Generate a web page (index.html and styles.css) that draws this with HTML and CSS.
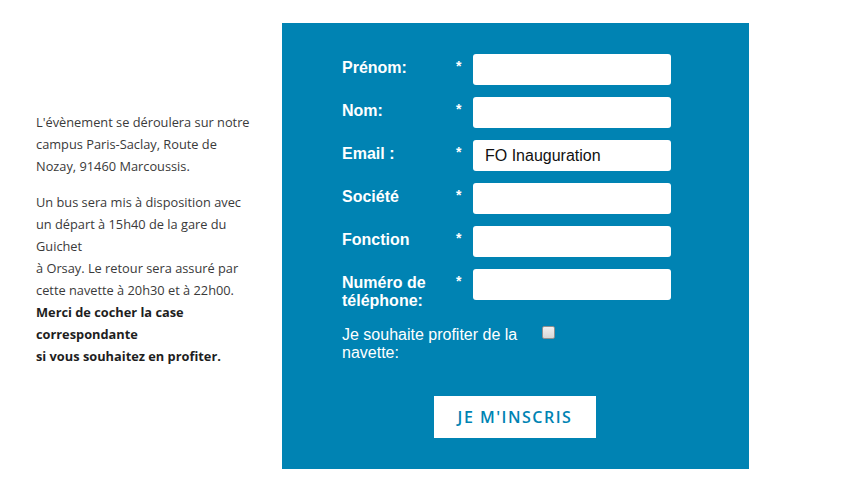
FILE: index.html
```html
<!DOCTYPE html>
<html lang="fr">
<head>
<meta charset="utf-8">
<title>Inscription</title>
<link rel="stylesheet" href="styles.css">
</head>
<body>
<div class="page">
  <div class="info">
    <p>L'évènement se déroulera sur notre campus Paris-Saclay, Route de Nozay, 91460 Marcoussis.</p>
    <p>Un bus sera mis à disposition avec un départ à 15h40 de la gare du Guichet<br>à Orsay. Le retour sera assuré par cette navette à 20h30 et à 22h00.<br><strong>Merci de cocher la case correspondante<br>si vous souhaitez en profiter.</strong></p>
  </div>
  <div class="panel">
    <form class="form">
      <div class="row"><label class="lbl">Prénom:</label><span class="req">*</span><input class="field" type="text"></div>
      <div class="row"><label class="lbl">Nom:</label><span class="req">*</span><input class="field" type="text"></div>
      <div class="row"><label class="lbl">Email :</label><span class="req">*</span><input class="field" type="text" value="FO Inauguration"></div>
      <div class="row"><label class="lbl">Société</label><span class="req">*</span><input class="field" type="text"></div>
      <div class="row"><label class="lbl">Fonction</label><span class="req">*</span><input class="field" type="text"></div>
      <div class="row"><label class="lbl lbl-wrap">Numéro de téléphone:</label><span class="req">*</span><input class="field" type="text"></div>
      <div class="check-row"><label class="check-lbl">Je souhaite profiter de la navette:</label><input class="check" type="checkbox"></div>
      <div class="actions"><button class="btn" type="button">JE M'INSCRIS</button></div>
    </form>
  </div>
</div>
</body>
</html>
```
FILE: styles.css
```css
html, body {
  margin: 0;
  padding: 0;
  background: #ffffff;
}
.page {
  display: flex;
  align-items: flex-start;
  padding-top: 23px;
}
.info {
  width: 222px;
  margin-left: 36px;
  padding-top: 88px;
  font-family: "Open Sans", "Liberation Sans", sans-serif;
  font-size: 12.8px;
  line-height: 22px;
  color: #3a3a3a;
}
.info p {
  margin: 0 0 14px 0;
}
.info strong {
  color: #1e1e1e;
  font-weight: 700;
}
.panel {
  margin-left: 24px;
  width: 467px;
  height: 446px;
  background: #0083b3;
  box-sizing: border-box;
  padding: 31px 0 0 60px;
}
.form {
  display: flex;
  flex-direction: column;
  gap: 12px;
  margin: 0;
}
.row {
  display: flex;
  align-items: flex-start;
}
.lbl {
  width: 114px;
  padding-top: 5px;
  font-family: "Liberation Sans", Arial, sans-serif;
  font-weight: 700;
  font-size: 16px;
  line-height: 18px;
  color: #ffffff;
}
.lbl-wrap {
  padding-right: 20px;
  box-sizing: border-box;
}
.req {
  width: 17px;
  padding-top: 4px;
  font-family: "Liberation Sans", Arial, sans-serif;
  font-weight: 700;
  font-size: 14px;
  line-height: 16px;
  color: #ffffff;
}
.field {
  width: 198px;
  height: 31px;
  box-sizing: border-box;
  border: none;
  border-radius: 3px;
  background: #ffffff;
  padding: 0 12px;
  margin: 0;
  font-family: "Liberation Sans", Arial, sans-serif;
  font-size: 16px;
  color: #111111;
  outline: none;
}
.check-row {
  display: flex;
  align-items: flex-start;
  padding-top: 4px;
}
.check-lbl {
  width: 190px;
  font-family: "Liberation Sans", Arial, sans-serif;
  font-size: 16px;
  line-height: 18px;
  color: #ffffff;
}
.check {
  appearance: none;
  -webkit-appearance: none;
  width: 13px;
  height: 13px;
  margin: 0 0 0 10px;
  box-sizing: border-box;
  border: 1px solid #8f8f8f;
  border-radius: 2px;
  background: linear-gradient(#f0f0f0, #d6d6d6);
}
.actions {
  display: flex;
  justify-content: center;
  padding-right: 61px;
  padding-top: 22px;
}
.btn {
  width: 162px;
  height: 42px;
  border: none;
  border-radius: 0;
  background: #ffffff;
  color: #0083b3;
  font-family: "Open Sans", "Liberation Sans", sans-serif;
  font-weight: 600;
  font-size: 16px;
  letter-spacing: 1.5px;
  padding: 0;
  cursor: pointer;
}
```
